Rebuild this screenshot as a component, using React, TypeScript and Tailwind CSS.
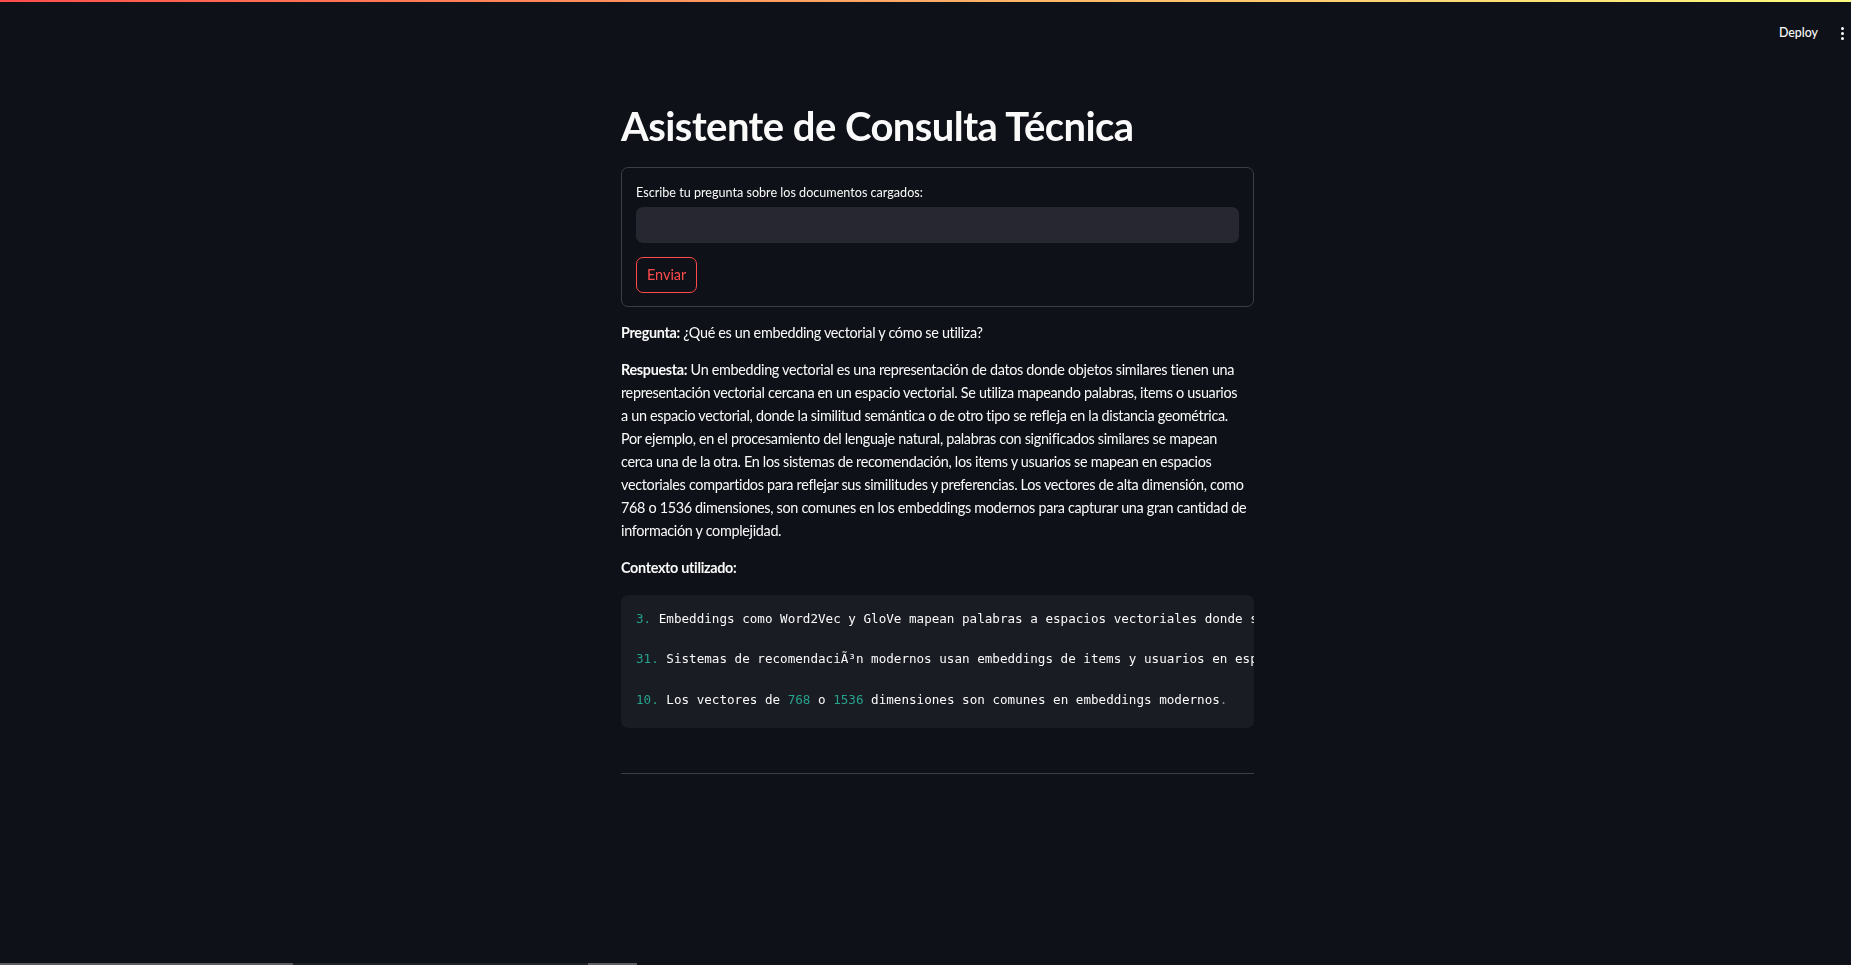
import { useState } from 'react'

const sans = "font-['Lato','Noto_Sans',sans-serif]"
const mono = "font-['DejaVu_Sans_Mono','Liberation_Mono',monospace]"

const answerLines = [
  'representación vectorial cercana en un espacio vectorial. Se utiliza mapeando palabras, items o usuarios',
  'a un espacio vectorial, donde la similitud semántica o de otro tipo se refleja en la distancia geométrica.',
  'Por ejemplo, en el procesamiento del lenguaje natural, palabras con significados similares se mapean',
  'cerca una de la otra. En los sistemas de recomendación, los items y usuarios se mapean en espacios',
  'vectoriales compartidos para reflejar sus similitudes y preferencias. Los vectores de alta dimensión, como',
  '768 o 1536 dimensiones, son comunes en los embeddings modernos para capturar una gran cantidad de',
  'información y complejidad.',
]

function Num({ children }: { children: React.ReactNode }) {
  return <span className="text-[#26a28c]">{children}</span>
}

export default function App() {
  const [question, setQuestion] = useState('')

  return (
    <div className={`h-screen flex flex-col bg-[#0e1117] text-[#fafafa] overflow-hidden ${sans}`}>
      <div className="h-[2px] bg-gradient-to-r from-[#ff4b4b] to-[#fffd80]" />

      <header className="h-[62px] flex items-center justify-end gap-[22px] pr-[6px]">
        <span className="text-[12.4px] font-medium">Deploy</span>
        <div className="flex flex-col gap-[2px] px-[1px]">
          <span className="w-[3px] h-[3px] rounded-full bg-[#fafafa]" />
          <span className="w-[3px] h-[3px] rounded-full bg-[#fafafa]" />
          <span className="w-[3px] h-[3px] rounded-full bg-[#fafafa]" />
        </div>
      </header>

      <main className="flex-1 pl-[24px]">
        <div className="w-[633px] mx-auto">
          <h1 className="mt-[38px] text-[40px] leading-[48px] font-bold tracking-[-0.55px]">
            Asistente de Consulta Técnica
          </h1>

          <form
            className="mt-[17px] border border-[#3b3e45] rounded-[7px] px-[14px] pt-[15px] pb-[13px]"
            onSubmit={e => e.preventDefault()}
          >
            <label className="block text-[12.6px] leading-[20px] mb-[4px]">
              Escribe tu pregunta sobre los documentos cargados:
            </label>
            <input
              value={question}
              onChange={e => setQuestion(e.target.value)}
              className="w-full h-[36px] rounded-[7px] bg-[#262730] px-3 text-[14.4px] outline-none"
            />
            <button
              type="submit"
              className="mt-[14px] h-[36px] px-[10px] rounded-[7px] border border-[#ff4b4b] text-[#ff4b4b] text-[14.4px]"
            >
              Enviar
            </button>
          </form>

          <div className="text-[14.4px] leading-[23px] tracking-[-0.32px] whitespace-nowrap">
            <p className="mt-[14px]">
              <b>Pregunta:</b> ¿Qué es un embedding vectorial y cómo se utiliza?
            </p>
            <p className="mt-[14px]">
              <b>Respuesta:</b> Un embedding vectorial es una representación de datos donde objetos similares tienen una
              {answerLines.map(line => (
                <span key={line}>
                  <br />
                  {line}
                </span>
              ))}
            </p>
            <p className="mt-[14px] font-bold">Contexto utilizado:</p>
          </div>

          <pre
            className={`mt-[16px] bg-[#1a1c24] rounded-[7px] pl-[15px] pt-[14px] pb-[18px] overflow-x-auto [scrollbar-width:none] text-[12.6px] leading-[20.2px] ${mono}`}
          >
            <Num>3.</Num> Embeddings como Word2Vec y GloVe mapean palabras a espacios vectoriales donde similitudes se reflejan.
            {'\n\n'}
            <Num>31.</Num> Sistemas de recomendaciÃ³n modernos usan embeddings de items y usuarios en espacios compartidos.
            {'\n\n'}
            <Num>10.</Num> Los vectores de <Num>768</Num> o <Num>1536</Num> dimensiones son comunes en embeddings modernos
            <span className="text-[#8b8d93]">.</span>
          </pre>

          <hr className="mt-[45px] border-t border-[#3b3e45]" />
        </div>
      </main>

      <div className="h-[2px] flex">
        <div className="w-[293px] bg-[#5a5c63]" />
        <div className="w-[295px] bg-[#1c2228]" />
        <div className="w-[49px] bg-[#5a5c63]" />
      </div>
    </div>
  )
}
